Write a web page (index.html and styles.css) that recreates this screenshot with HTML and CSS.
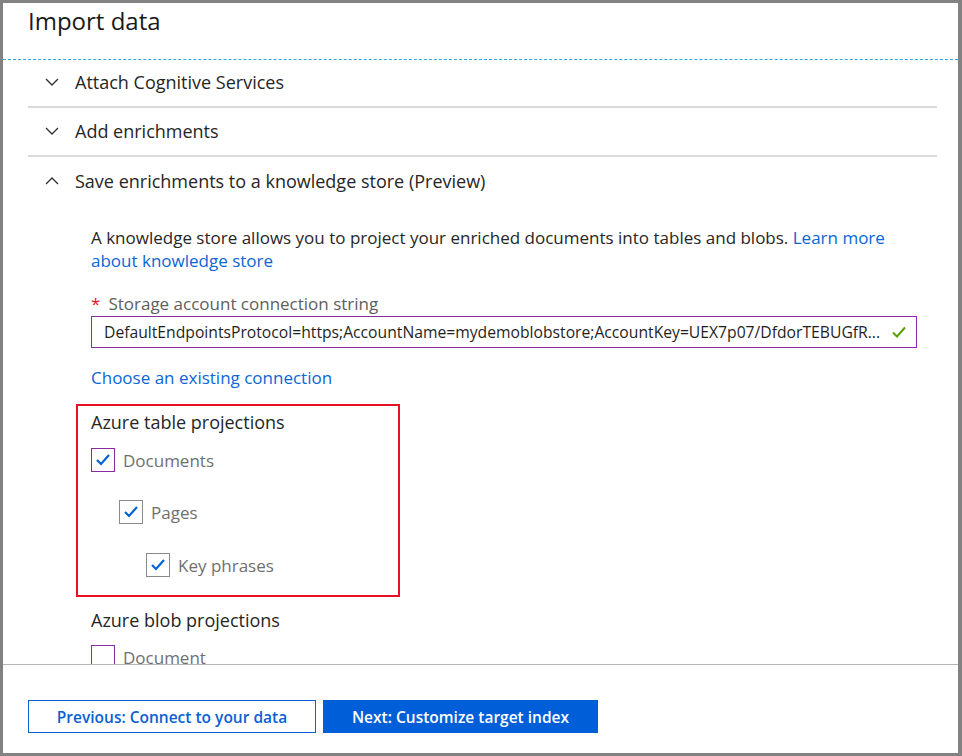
FILE: index.html
```html
<!DOCTYPE html>
<html>
<head>
<meta charset="utf-8">
<link rel="stylesheet" href="styles.css">
</head>
<body>
<div class="frame">
  <header class="header">
    <h1 class="title">Import data</h1>
  </header>
  <main class="content">
    <div class="acc-row first">
      <svg class="chev" width="14" height="8" viewBox="0 0 14 8"><path d="M1 1l6 6 6-6" fill="none" stroke="#333" stroke-width="1.4"/></svg>
      <span>Attach Cognitive Services</span>
    </div>
    <div class="acc-row">
      <svg class="chev" width="14" height="8" viewBox="0 0 14 8"><path d="M1 1l6 6 6-6" fill="none" stroke="#333" stroke-width="1.4"/></svg>
      <span>Add enrichments</span>
    </div>
    <div class="acc-row open">
      <svg class="chev" width="14" height="8" viewBox="0 0 14 8"><path d="M1 7l6-6 6 6" fill="none" stroke="#333" stroke-width="1.4"/></svg>
      <span>Save enrichments to a knowledge store (Preview)</span>
    </div>
    <div class="section">
      <p class="intro">A knowledge store allows you to project your enriched documents into tables and blobs. <a class="link">Learn more about knowledge store</a></p>
      <div class="field-label"><span class="req">*</span>Storage account connection string</div>
      <div class="input">
        <span class="input-text">DefaultEndpointsProtocol=https;AccountName=mydemoblobstore;AccountKey=UEX7p07/DfdorTEBUGfR...</span>
        <svg class="ok" width="14" height="12" viewBox="0 0 14 12"><path d="M1 6.5l4 4 8-9" fill="none" stroke="#57a300" stroke-width="2"/></svg>
      </div>
      <a class="link choose">Choose an existing connection</a>
      <div class="highlight">
        <div class="group-title">Azure table projections</div>
        <label class="cb lvl0"><span class="box focus"><svg width="16" height="14" viewBox="0 0 16 14"><path d="M2 7l4 4 8-9" fill="none" stroke="#0062d6" stroke-width="2.2"/></svg></span>Documents</label>
        <label class="cb lvl1"><span class="box"><svg width="16" height="14" viewBox="0 0 16 14"><path d="M2 7l4 4 8-9" fill="none" stroke="#0062d6" stroke-width="2.2"/></svg></span>Pages</label>
        <label class="cb lvl2"><span class="box"><svg width="16" height="14" viewBox="0 0 16 14"><path d="M2 7l4 4 8-9" fill="none" stroke="#0062d6" stroke-width="2.2"/></svg></span>Key phrases</label>
      </div>
      <div class="group-title blob">Azure blob projections</div>
      <label class="cb lvl0 last"><span class="box focus"></span>Document</label>
    </div>
  </main>
  <footer class="footer">
    <button class="btn secondary">Previous: Connect to your data</button>
    <button class="btn primary">Next: Customize target index</button>
  </footer>
</div>
</body>
</html>
```

FILE: styles.css
```css
* { box-sizing: border-box; }
html, body { margin: 0; padding: 0; }
body {
  font-family: "Open Sans", "Noto Sans", sans-serif;
  color: #262626;
  background: #fff;
}
.frame {
  width: 962px;
  height: 756px;
  border: 3px solid #828282;
  border-right-width: 4px;
  background: #fff;
  display: flex;
  flex-direction: column;
  overflow: hidden;
}
.header {
  height: 57px;
  border-bottom: 1px dashed #2aa7e0;
  padding: 0 0 0 25px;
  flex: none;
}
.title {
  margin: 0;
  font-size: 24px;
  font-weight: 400;
  line-height: 32px;
  padding-top: 2px;
  color: #1a1a1a;
}
.content {
  flex: 1;
  overflow: hidden;
  padding: 0 21px 0 25px;
}
.acc-row {
  height: 49px;
  border-bottom: 2px solid #dadada;
  display: flex;
  align-items: center;
  font-size: 18px;
  color: #262626;
  padding-bottom: 2px;
}
.acc-row.first { height: 48px; padding-bottom: 3px; }
.acc-row.open { border-bottom: none; height: 50px; padding-bottom: 2px; }
.chev { margin: 0 16px 0 17px; flex: none; }
.section { padding-left: 63px; padding-top: 19px; }
.intro {
  margin: 0;
  font-size: 17px;
  line-height: 23px;
  color: #262626;
  max-width: 810px;
}
.link { color: #0b66d6; text-decoration: none; }
.field-label {
  margin-top: 21px;
  font-size: 17px;
  line-height: 22px;
  color: #5e5e5e;
}
.req { color: #e81123; margin-right: 8px; }
.input {
  margin-top: 1px;
  width: 826px;
  height: 32px;
  border: 1px solid #8a2ba3;
  display: flex;
  align-items: center;
  padding: 0 10px 0 12px;
  font-size: 15.7px;
  color: #1f1f1f;
}
.input-text { flex: 1; white-space: nowrap; overflow: hidden; }
.ok { flex: none; }
.choose {
  display: block;
  margin-top: 19px;
  font-size: 17px;
  line-height: 22px;
}
.highlight {
  margin: 15px 0 0 -15px;
  width: 324px;
  height: 193px;
  border: 2px solid #e81123;
  padding: 4px 0 0 13px;
}
.group-title {
  font-size: 18px;
  line-height: 24px;
  color: #262626;
}
.group-title.blob { margin-top: 11px; }
.cb {
  display: flex;
  align-items: center;
  font-size: 17px;
  color: #707070;
  height: 24px;
}
.cb.lvl0 { margin-top: 14px; }
.cb.lvl1 { margin-top: 28px; padding-left: 28px; }
.cb.lvl2 { margin-top: 29px; padding-left: 55px; }
.cb.last { margin-top: 13px; }
.box {
  width: 24px;
  height: 24px;
  border: 1px solid #8a8a8a;
  display: inline-flex;
  align-items: center;
  justify-content: center;
  margin-right: 8px;
  flex: none;
}
.box.focus { border-color: #8a2ba3; }
.footer {
  flex: none;
  height: 89px;
  border-top: 1px solid #b5b5b5;
  display: flex;
  align-items: flex-start;
  padding: 35px 0 0 25px;
  gap: 7px;
}
.btn {
  height: 33px;
  font-family: "Open Sans", "Noto Sans", sans-serif;
  font-size: 15.5px;
  font-weight: 600;
  padding: 0;
  cursor: pointer;
}
.btn.secondary {
  width: 288px;
  background: #fff;
  color: #0b5fd3;
  border: 1px solid #0b5fd3;
}
.btn.primary {
  width: 275px;
  background: #005ed9;
  color: #fff;
  border: 1px solid #005ed9;
}
```
